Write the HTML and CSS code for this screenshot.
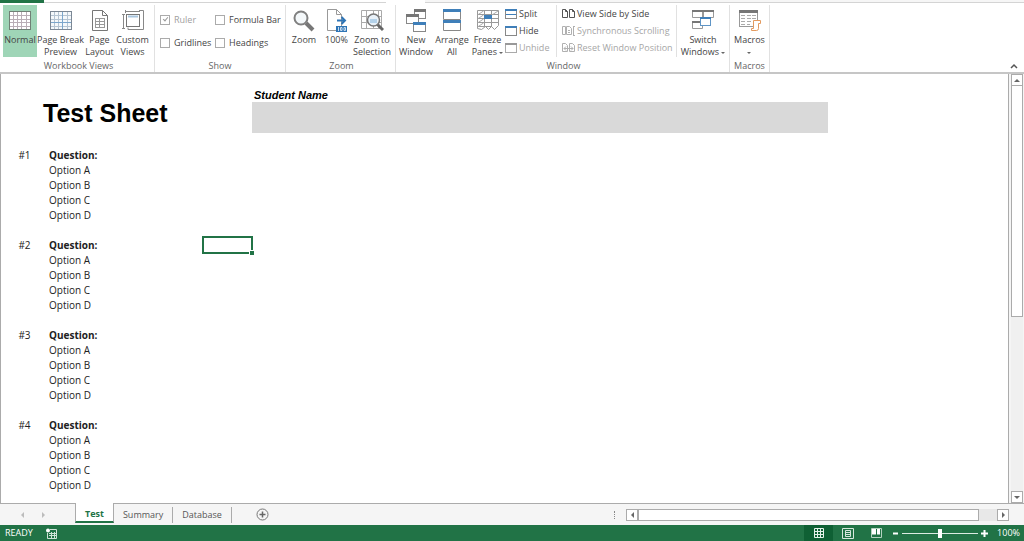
FILE: index.html
```
<!DOCTYPE html>
<html lang="en">

<head>
    <meta charset="UTF-8">
    <title>Test Sheet</title>
    <meta name="viewport" content="width=device-width, initial-scale=1.0">
    <link rel="stylesheet" href="styles.css">
</head>

<body>
    <!-- Ribbon tab strip -->
    <div class="tab-strip">
        <div class="file-tab"></div>
        <div class="strip-line strip-left"></div>
        <div class="active-tab"></div>
        <div class="strip-line strip-rest"></div>
    </div>

    <!-- Ribbon -->
    <header class="ribbon">
        <section class="group views-group">
            <div class="group-items">
                <button class="big-btn normal-btn selected">
                    <svg width="24" height="22" viewBox="0 0 24 22">
                        <rect x="1.5" y="1.5" width="21" height="18" fill="#fff" stroke="#6f8075" />
                        <path d="M2 5.5h20M2 9.5h20M2 12.5h20M2 16.5h20M5.5 2v17M9.5 2v17M13.5 2v17M18.5 2v17" stroke="#b9aeb6" />
                    </svg>
                    <span>Normal</span>
                </button>
                <button class="big-btn break-btn">
                    <svg width="24" height="22" viewBox="0 0 24 22">
                        <rect x="1.5" y="1.5" width="21" height="18" fill="#f4f8fb" stroke="#7b8794" />
                        <path d="M2 5.5h20M2 9.5h20M2 16.5h20M5.5 2v17M9.5 2v17M18.5 2v17" stroke="#b5c4d2" />
                        <path d="M2 12.5h20M13.5 2v17" stroke="#7ba6cc" />
                    </svg>
                    <span>Page Break Preview</span>
                </button>
                <button class="big-btn layout-btn">
                    <svg width="18" height="22" viewBox="0 0 18 22">
                        <path d="M1.5.5h10l5 5v15h-15z" fill="#fff" stroke="#777" />
                        <path d="M11.5.5v5h5" fill="none" stroke="#777" />
                        <path d="M4 8.5h10M4 11.5h10M4 14.5h10M4 17.5h10M4.5 8v10M8.5 8v10M13.5 8v10" stroke="#999" />
                    </svg>
                    <span>Page Layout</span>
                </button>
                <button class="big-btn custom-btn">
                    <svg width="24" height="22" viewBox="0 0 24 22">
                        <path d="M2.5 5v13M1 4.5h3M1 18.5h3M5 1.5h14M4.500 0v3M18 .5h4.500v19H7v-2" fill="none" stroke="#888" />
                        <rect x="5.5" y="4.5" width="13" height="12" fill="#fff" stroke="#777" />
                        <path d="M7 6.500h10" stroke="#a9c6df" stroke-width="2" />
                    </svg>
                    <span>Custom Views</span>
                </button>
            </div>
            <div class="group-name">Workbook Views</div>
        </section>

        <section class="group show-group">
            <div class="group-items checks">
                <label class="off"><input type="checkbox" checked disabled>Ruler</label>
                <label><input type="checkbox">Formula Bar</label>
                <label><input type="checkbox">Gridlines</label>
                <label><input type="checkbox">Headings</label>
            </div>
            <div class="group-name">Show</div>
        </section>

        <section class="group zoom-group">
            <div class="group-items">
                <button class="big-btn zoom-btn">
                    <svg width="24" height="22" viewBox="0 0 24 22">
                        <path d="M14 13l7 7" stroke="#777" stroke-width="4" />
                        <circle cx="9" cy="8" r="6.5" fill="#f4f8fa" stroke="#808080" stroke-width="2" />
                    </svg>
                    <span>Zoom</span>
                </button>
                <button class="big-btn hundred-btn">
                    <svg width="22" height="24" viewBox="0 0 22 24">
                        <path d="M1.5.5h9l5 5v16h-14z" fill="#fff" stroke="#999" />
                        <path d="M10.5.5v5h5" fill="none" stroke="#999" />
                        <path d="M11 11.5h8M15.5 8l3.500 3.500-3.500 3.500" fill="none" stroke="#2e75b6" stroke-width="2" />
                        <rect x="10" y="17" width="11" height="6" fill="#2e75b6" />
                        <path d="M12.5 18v4M14.5 18.500h1.5v3h-1.500zM18 18.500h1.5v3H18z" fill="none" stroke="#c8dcee" />
                    </svg>
                    <span>100%</span>
                </button>
                <button class="big-btn selection-btn">
                    <svg width="24" height="22" viewBox="0 0 24 22">
                        <path d="M1.5.5h20v18h-20zM1 6.5h20M1 12.5h20M6.5 0v18M13.5 0v18M18.5 0v18" fill="none" stroke="#aaa" />
                        <path d="M17 14l6 6" stroke="#666" stroke-width="3" />
                        <circle cx="13.5" cy="10" r="6" fill="#e9f1f8" stroke="#777" stroke-width="1.5" />
                        <path d="M10 9h7v4h-7z" fill="#b4d2ea" />
                    </svg>
                    <span>Zoom to Selection</span>
                </button>
            </div>
            <div class="group-name">Zoom</div>
        </section>

        <section class="group window-group">
            <div class="group-items">
                <button class="big-btn window-btn">
                    <svg width="22" height="24" viewBox="0 0 22 24">
                        <rect x="9.5" y=".5" width="11" height="9" fill="#fff" stroke="#888" />
                        <path d="M9 1.5h12" stroke="#777" stroke-width="3" />
                        <rect x="1.5" y="5.5" width="12" height="9" fill="#fff" stroke="#888" />
                        <path d="M1 6.5h13" stroke="#777" stroke-width="3" />
                        <rect x="8.5" y="13.5" width="12" height="9" fill="#fff" stroke="#888" />
                        <path d="M8 14.5h13" stroke="#3f7fb9" stroke-width="3" />
                    </svg>
                    <span>New Window</span>
                </button>
                <button class="big-btn window-btn">
                    <svg width="20" height="24" viewBox="0 0 20 24">
                        <path d="M1.5.5h17v10h-17zM1.5 11.5h17v10h-17z" fill="#fff" stroke="#888" />
                        <path d="M1 1.5h18M1 12.5h18" stroke="#3f7fb9" stroke-width="3" />
                    </svg>
                    <span>Arrange All</span>
                </button>
                <button class="big-btn freeze-btn">
                    <svg width="24" height="22" viewBox="0 0 24 22">
                        <path d="M1.5.5h21v15l-4 4-3-3-3 3-3-3-4 3-4-1zM1 4.5h21M1 8.5h21M1 12.5h21M1 16.5h14M8.5 0v17M15.5 0v17" fill="#fff" stroke="#999" />
                        <path d="M1.5 5l6-4M1.5 9l6-4M1.5 13l6-4M1.5 17l6-4M16 5l6-4" stroke="#aaa" />
                        <rect x="8" y="5" width="8" height="4" fill="#3f7fb9" />
                    </svg>
                    <span>Freeze Panes <i class="caret"></i></span>
                </button>
                <div class="small-list split-list">
                    <button class="small-btn">
                        <svg width="12" height="12" viewBox="0 0 12 12">
                            <rect x=".5" y="1.5" width="11" height="9" fill="#fff" stroke="#888" />
                            <path d="M0 2h12" stroke="#3f7fb9" stroke-width="2" />
                            <path d="M1 6.5h10" stroke="#3f7fb9" />
                        </svg>Split
                    </button>
                    <button class="small-btn">
                        <svg width="12" height="12" viewBox="0 0 12 12">
                            <rect x=".5" y="1.5" width="11" height="9" fill="#fff" stroke="#888" />
                            <path d="M0 2h12" stroke="#3f7fb9" stroke-width="2" />
                        </svg>Hide
                    </button>
                    <button class="small-btn" disabled>
                        <svg width="12" height="12" viewBox="0 0 12 12">
                            <rect x=".5" y="1.5" width="11" height="9" fill="#fff" stroke="#aaa" />
                            <path d="M0 2h12" stroke="#999" stroke-width="2" />
                        </svg>Unhide
                    </button>
                </div>
                <div class="small-list side-list">
                    <button class="small-btn">
                        <svg width="13" height="12" viewBox="0 0 13 12">
                            <path d="M.5 1.5h3l2 2v6h-5zM7.5 1.5h3l2 2v6h-5zM3.5 1.5v2h2M10.5 1.5v2h2" fill="#fff" stroke="#555" />
                        </svg>View Side by Side
                    </button>
                    <button class="small-btn" disabled>
                        <svg width="13" height="12" viewBox="0 0 13 12">
                            <path d="M.5 1.5h3v8h-3zM4.5 1.5h3l2 2v6h-5zM6 5.5h2M6 7.5h2M11.5 1v10M11 1.5h2M11 10.5h2" fill="none" stroke="#b0b0b0" />
                        </svg>Synchronous Scrolling
                    </button>
                    <button class="small-btn" disabled>
                        <svg width="13" height="12" viewBox="0 0 13 12">
                            <path d="M.5 1.5h3l2 2v6h-5zM7.5 1.5h3l2 2v6h-5zM2 6.5h9M4 4.500l-2 2 2 2M9 4.500l2 2-2 2" fill="none" stroke="#b0b0b0" />
                        </svg>Reset Window Position
                    </button>
                </div>
                <button class="big-btn switch-btn">
                    <svg width="24" height="22" viewBox="0 0 24 22">
                        <path d="M1.5.5h10v7h-10zM12.5.5h10v7h-10zM1.5 11.5h10v7h-10z" fill="#fff" stroke="#999" />
                        <path d="M1 1h22M1 12h11" stroke="#777" stroke-width="2" />
                        <rect x="9.5" y="7.5" width="10" height="8" fill="#fff" stroke="#5f95c6" />
                        <path d="M9 8h11" stroke="#3f7fb9" stroke-width="2" />
                    </svg>
                    <span>Switch Windows <i class="caret"></i></span>
                </button>
            </div>
            <div class="group-name">Window</div>
        </section>

        <section class="group macros-group">
            <div class="group-items">
                <button class="big-btn macros-btn">
                    <svg width="24" height="22" viewBox="0 0 24 22">
                        <rect x="1.5" y=".5" width="18" height="16" fill="#fff" stroke="#999" />
                        <path d="M1 1.5h19" stroke="#777" stroke-width="3" />
                        <path d="M3 5.5h4M9 5.5h4M14 5.5h4M3 8.5h4M9 8.5h4M14 8.5h4M3 11.5h4M9 11.5h4M3 14.5h4M9 14.5h3" stroke="#aaa" />
                        <path d="M15.5 10.5h7v3h-2v5q0 2-2 2h-5v-2h2z" fill="#fff" stroke="#e39a5f" />
                    </svg>
                    <span>Macros<br><i class="caret"></i></span>
                </button>
            </div>
            <div class="group-name">Macros</div>
        </section>

        <button class="collapse-btn" aria-label="Collapse the ribbon">
            <svg width="8" height="6" viewBox="0 0 8 6">
                <path d="M1 5l3-3 3 3" fill="none" stroke="#555" stroke-width="1.5" />
            </svg>
        </button>
    </header>

    <!-- Worksheet -->
    <main class="workspace">
        <div class="sheet">
            <table>
                <colgroup>
                    <col class="col-number">
                    <col class="col-cell">
                    <col class="col-cell">
                    <col class="col-cell">
                    <col class="col-cell">
                    <col class="col-name">
                </colgroup>
                <tr class="name-row">
                    <th class="title" colspan="5" rowspan="2">Test Sheet</th>
                    <th class="name-label">Student Name</th>
                </tr>
                <tr class="name-box-row">
                    <td class="name-box"></td>
                </tr>
                <tr><td colspan="6"></td></tr>
                <tr><td class="number">#1</td><th colspan="3">Question:</th></tr>
                <tr><td></td><td colspan="3">Option A</td></tr>
                <tr><td></td><td colspan="3">Option B</td></tr>
                <tr><td></td><td colspan="3">Option C</td></tr>
                <tr><td></td><td colspan="3">Option D</td></tr>
                <tr><td colspan="6"></td></tr>
                <tr><td class="number">#2</td><th colspan="3">Question:</th><td class="active-cell"></td></tr>
                <tr><td></td><td colspan="3">Option A</td></tr>
                <tr><td></td><td colspan="3">Option B</td></tr>
                <tr><td></td><td colspan="3">Option C</td></tr>
                <tr><td></td><td colspan="3">Option D</td></tr>
                <tr><td colspan="6"></td></tr>
                <tr><td class="number">#3</td><th colspan="3">Question:</th></tr>
                <tr><td></td><td colspan="3">Option A</td></tr>
                <tr><td></td><td colspan="3">Option B</td></tr>
                <tr><td></td><td colspan="3">Option C</td></tr>
                <tr><td></td><td colspan="3">Option D</td></tr>
                <tr><td colspan="6"></td></tr>
                <tr><td class="number">#4</td><th colspan="3">Question:</th></tr>
                <tr><td></td><td colspan="3">Option A</td></tr>
                <tr><td></td><td colspan="3">Option B</td></tr>
                <tr><td></td><td colspan="3">Option C</td></tr>
                <tr><td></td><td colspan="3">Option D</td></tr>
            </table>
        </div>
        <div class="v-scroll">
            <button class="scroll-btn" aria-label="Scroll up"><i class="arrow up"></i></button>
            <div class="v-track">
                <div class="v-thumb"></div>
            </div>
            <button class="scroll-btn" aria-label="Scroll down"><i class="arrow down"></i></button>
        </div>
    </main>

    <!-- Sheet tabs -->
    <nav class="sheet-bar">
        <button class="nav-arrow" aria-label="Previous sheet"><i class="arrow left"></i></button>
        <button class="nav-arrow" aria-label="Next sheet"><i class="arrow right"></i></button>
        <a href="#test" class="sheet-tab current">Test</a>
        <a href="#summary" class="sheet-tab">Summary</a>
        <a href="#database" class="sheet-tab">Database</a>
        <button class="add-btn" aria-label="New sheet">
            <svg width="13" height="13" viewBox="0 0 13 13">
                <circle cx="6.5" cy="6.5" r="5.5" fill="none" stroke="#777" />
                <path d="M3.5 6.5h6M6.5 3.5v6" stroke="#666" stroke-width="1.5" />
            </svg>
        </button>
        <div class="grip"></div>
        <div class="h-scroll">
            <button class="scroll-btn" aria-label="Scroll left"><i class="arrow left"></i></button>
            <div class="h-track">
                <div class="h-thumb"></div>
            </div>
            <button class="scroll-btn" aria-label="Scroll right"><i class="arrow right"></i></button>
        </div>
    </nav>

    <!-- Status bar -->
    <footer class="status-bar">
        <span>READY</span>
        <svg class="record" width="11" height="11" viewBox="0 0 11 11">
            <path d="M4 1.5h6.5v9h-9V5M3 5.5h7M3 7.5h7M5.5 4v6M8.5 4v6" fill="none" stroke="#cfe3d7" />
            <circle cx="2" cy="2.5" r="2" fill="#fff" />
        </svg>
        <button class="view-btn on" aria-label="Normal view">
            <svg width="12" height="11" viewBox="0 0 12 11">
                <path d="M1.5.5h9v9h-9zM1 3.5h10M1 6.5h10M4.5 0v10M7.5 0v10" fill="none" stroke="#e5f1ea" />
            </svg>
        </button>
        <button class="view-btn" aria-label="Page layout view">
            <svg width="12" height="11" viewBox="0 0 12 11">
                <path d="M.5.5h11v10H.5zM3.5 2.5h5v6h-5zM4 4.5h4M4 6.5h4" fill="none" stroke="#d5e7dc" />
            </svg>
        </button>
        <button class="view-btn" aria-label="Page break view">
            <svg width="12" height="11" viewBox="0 0 12 11">
                <path d="M1 .5h4v6H1zM6 .5h3v6H6z" fill="#fff" />
                <path d="M.5.5h10v9H.5z" fill="none" stroke="#b4d2c0" />
            </svg>
        </button>
        <button class="zoom-step zoom-out" aria-label="Zoom out">
            <svg width="7" height="7" viewBox="0 0 7 7"><path d="M1 3.5h5" stroke="#fff" stroke-width="2" /></svg>
        </button>
        <input type="range" min="0" max="100" value="50" aria-label="Zoom level">
        <button class="zoom-step" aria-label="Zoom in">
            <svg width="7" height="7" viewBox="0 0 7 7"><path d="M0 3.5h7M3.5 0v7" stroke="#fff" stroke-width="2" /></svg>
        </button>
        <span class="zoom-value">100%</span>
    </footer>
</body>

</html>
```
FILE: styles.css
```
* {
    box-sizing: border-box;
}

body {
    display: flex;
    flex-direction: column;
    min-height: 100vh;
    margin: 0;
    background-color: #fff;
    color: #444;
    font-family: "Open Sans", "Noto Sans", sans-serif;
    font-size: 9px;
    line-height: 12px;
}

button {
    margin: 0;
    padding: 0;
    border: none;
    background: none;
    color: inherit;
    font: inherit;
}

svg {
    display: block;
    flex: none;
}

/* Tab strip */
.tab-strip {
    display: flex;
    height: 3px;
}

.file-tab {
    width: 44px;
    background-color: #217346;
}

.strip-line {
    border-bottom: 1px solid #d4d4d4;
}

.strip-left {
    width: 342px;
}

.active-tab {
    width: 39px;
}

.strip-rest {
    flex: 1;
    background-color: #f6f6f6;
}

/* Ribbon */
.ribbon {
    display: flex;
    padding-top: 2px;
    border-bottom: 2px solid #c6c6c6;
}

.group {
    display: flex;
    flex-direction: column;
    border-right: 1px solid #e1e1e1;
}

.group-items {
    display: flex;
    height: 55px;
}

.group-name {
    height: 12px;
    color: #666;
    text-align: center;
}

.views-group {
    width: 155px;
    padding-left: 3px;
}

.show-group {
    width: 131px;
}

.zoom-group {
    width: 110px;
    padding-left: 2px;
}

.window-group {
    width: 334px;
    padding-left: 2px;
}

.macros-group {
    width: 40px;
}

.big-btn {
    display: flex;
    flex-direction: column;
    align-items: center;
    height: 52px;
    padding-top: 3px;
    text-align: center;
}

.big-btn svg {
    height: 26px;
}

.selected {
    background-color: #9fd5b7;
}

.normal-btn {
    width: 34px;
}

.break-btn {
    width: 47px;
}

.layout-btn {
    width: 31px;
}

.custom-btn {
    width: 35px;
}

.zoom-btn {
    width: 32px;
}

.hundred-btn {
    width: 33px;
}

.selection-btn {
    width: 38px;
}

.window-btn {
    width: 36px;
}

.freeze-btn {
    width: 35px;
}

.switch-btn {
    width: 52px;
}

.macros-btn {
    width: 39px;
}

.caret {
    display: inline-block;
    border: 2px solid transparent;
    border-top-color: #666;
    border-bottom: none;
    vertical-align: middle;
}

.checks {
    display: grid;
    grid-template-columns: 55px 70px;
    grid-template-rows: 23px 23px;
    padding: 3px 0 0 5px;
}

.checks label {
    display: flex;
    align-items: center;
    gap: 4px;
}

.checks .off {
    color: #a0a0a0;
}

input[type="checkbox"] {
    appearance: none;
    width: 10px;
    height: 10px;
    margin: 0;
    border: 1px solid #ababab;
    background-color: #fff;
}

input[type="checkbox"]:checked::after {
    content: "";
    display: block;
    width: 2px;
    height: 4px;
    margin: 0 auto;
    border: solid #999;
    border-width: 0 1px 1px 0;
    box-sizing: content-box;
    transform: rotate(40deg);
}

.small-list {
    display: flex;
    flex-direction: column;
    height: 52px;
    border-right: 1px solid #e1e1e1;
}

.split-list {
    width: 52px;
}

.side-list {
    width: 120px;
    padding-left: 5px;
}

.small-btn {
    display: flex;
    align-items: center;
    gap: 2px;
    height: 17px;
    white-space: nowrap;
}

.small-btn:disabled {
    color: #a6a6a6;
}

.collapse-btn {
    align-self: flex-end;
    margin: 0 6px 3px auto;
}

/* Worksheet */
.workspace {
    display: flex;
    flex: 1;
}

.sheet {
    flex: 1;
    padding-top: 14px;
    border-left: 1px solid #ababab;
    border-right: 1px solid #ababab;
}

table {
    table-layout: fixed;
    width: 827px;
    border-collapse: collapse;
    color: #222;
    font-size: 10px;
    line-height: 15px;
}

.col-number {
    width: 47px;
}

.col-cell {
    width: 51px;
}

tr {
    height: 15px;
}

th,
td {
    padding: 0 1px;
    text-align: left;
}

th {
    font-weight: 700;
}

.number {
    text-align: center;
}

.name-row {
    height: 14px;
}

.name-box-row {
    height: 31px;
}

.title {
    padding: 4px 0 0 42px;
    color: #000;
    font-family: "Liberation Sans", Arial, sans-serif;
    font-size: 25px;
    line-height: 30px;
}

.name-label {
    padding-left: 2px;
    color: #000;
    font-family: "Liberation Sans", Arial, sans-serif;
    font-size: 11px;
    font-style: italic;
    line-height: 14px;
}

.name-box {
    background-color: #d9d9d9;
}

.active-cell {
    position: relative;
}

.active-cell::before {
    content: "";
    position: absolute;
    inset: -2px -1px -1px 1px;
    border: 2px solid #217346;
}

.active-cell::after {
    content: "";
    position: absolute;
    right: -2px;
    bottom: -2px;
    width: 4px;
    height: 4px;
    outline: 1px solid #fff;
    background-color: #217346;
}

/* Scroll bars */
.v-scroll {
    display: flex;
    flex-direction: column;
    width: 15px;
    padding: 0 1px 0 2px;
    background-color: #f5f5f5;
}

.scroll-btn {
    display: flex;
    align-items: center;
    justify-content: center;
    width: 12px;
    height: 12px;
    border: 1px solid #ababab;
    background-color: #fff;
}

.v-track {
    flex: 1;
    width: 12px;
    background-color: #f0f0f0;
}

.v-thumb {
    height: 57%;
    border: 1px solid #ababab;
    border-top: none;
    background-color: #fff;
}

.arrow {
    border: 3px solid transparent;
}

.up {
    border-top: none;
    border-bottom-color: #666;
}

.down {
    border-bottom: none;
    border-top-color: #666;
}

.left {
    border-left: none;
    border-right-color: #666;
}

.right {
    border-right: none;
    border-left-color: #666;
}

/* Sheet tabs */
.sheet-bar {
    display: flex;
    align-items: center;
    height: 22px;
    padding: 0 15px;
    border-top: 1px solid #ababab;
    background-color: #f5f5f5;
}

.nav-arrow {
    display: flex;
    justify-content: center;
    width: 15px;
    margin-right: 6px;
    opacity: 0.4;
}

.nav-arrow + .sheet-tab {
    margin-left: 18px;
}

.sheet-tab {
    height: 16px;
    padding: 0 9px;
    border-right: 1px solid #ababab;
    color: #555;
    line-height: 16px;
    text-decoration: none;
}

.current {
    align-self: flex-start;
    height: 20px;
    margin-top: -1px;
    padding-top: 3px;
    border-bottom: 2px solid #217346;
    border-left: 1px solid #ababab;
    background-color: #fff;
    color: #217346;
    font-weight: 700;
}

.add-btn {
    margin-left: 24px;
}

.grip {
    height: 8px;
    margin: 0 11px 0 auto;
    border-left: 1px dotted #888;
}

.h-scroll {
    display: flex;
    width: 38.5%;
}

.h-track {
    flex: 1;
    background-color: #e8e8e8;
}

.h-thumb {
    width: 95%;
    height: 12px;
    border: 1px solid #ababab;
    background-color: #fff;
}

/* Status bar */
.status-bar {
    display: flex;
    align-items: center;
    height: 16px;
    padding: 0 4px 0 5px;
    background-color: #217346;
    color: #fff;
}

.record {
    margin: 0 auto 0 13px;
}

.view-btn {
    display: flex;
    align-items: center;
    justify-content: center;
    width: 29px;
    height: 16px;
}

.on {
    background-color: #0f6034;
}

.zoom-step {
    margin: 0 3px;
}

.zoom-out {
    margin-left: 1px;
}

input[type="range"] {
    appearance: none;
    width: 76px;
    height: 11px;
    margin: 0;
    background: linear-gradient(#dcebe2, #dcebe2) center / 100% 1px no-repeat;
}

input[type="range"]::-webkit-slider-thumb {
    appearance: none;
    width: 4px;
    height: 9px;
    background-color: #fff;
}

.zoom-value {
    margin-left: 6px;
}
```
